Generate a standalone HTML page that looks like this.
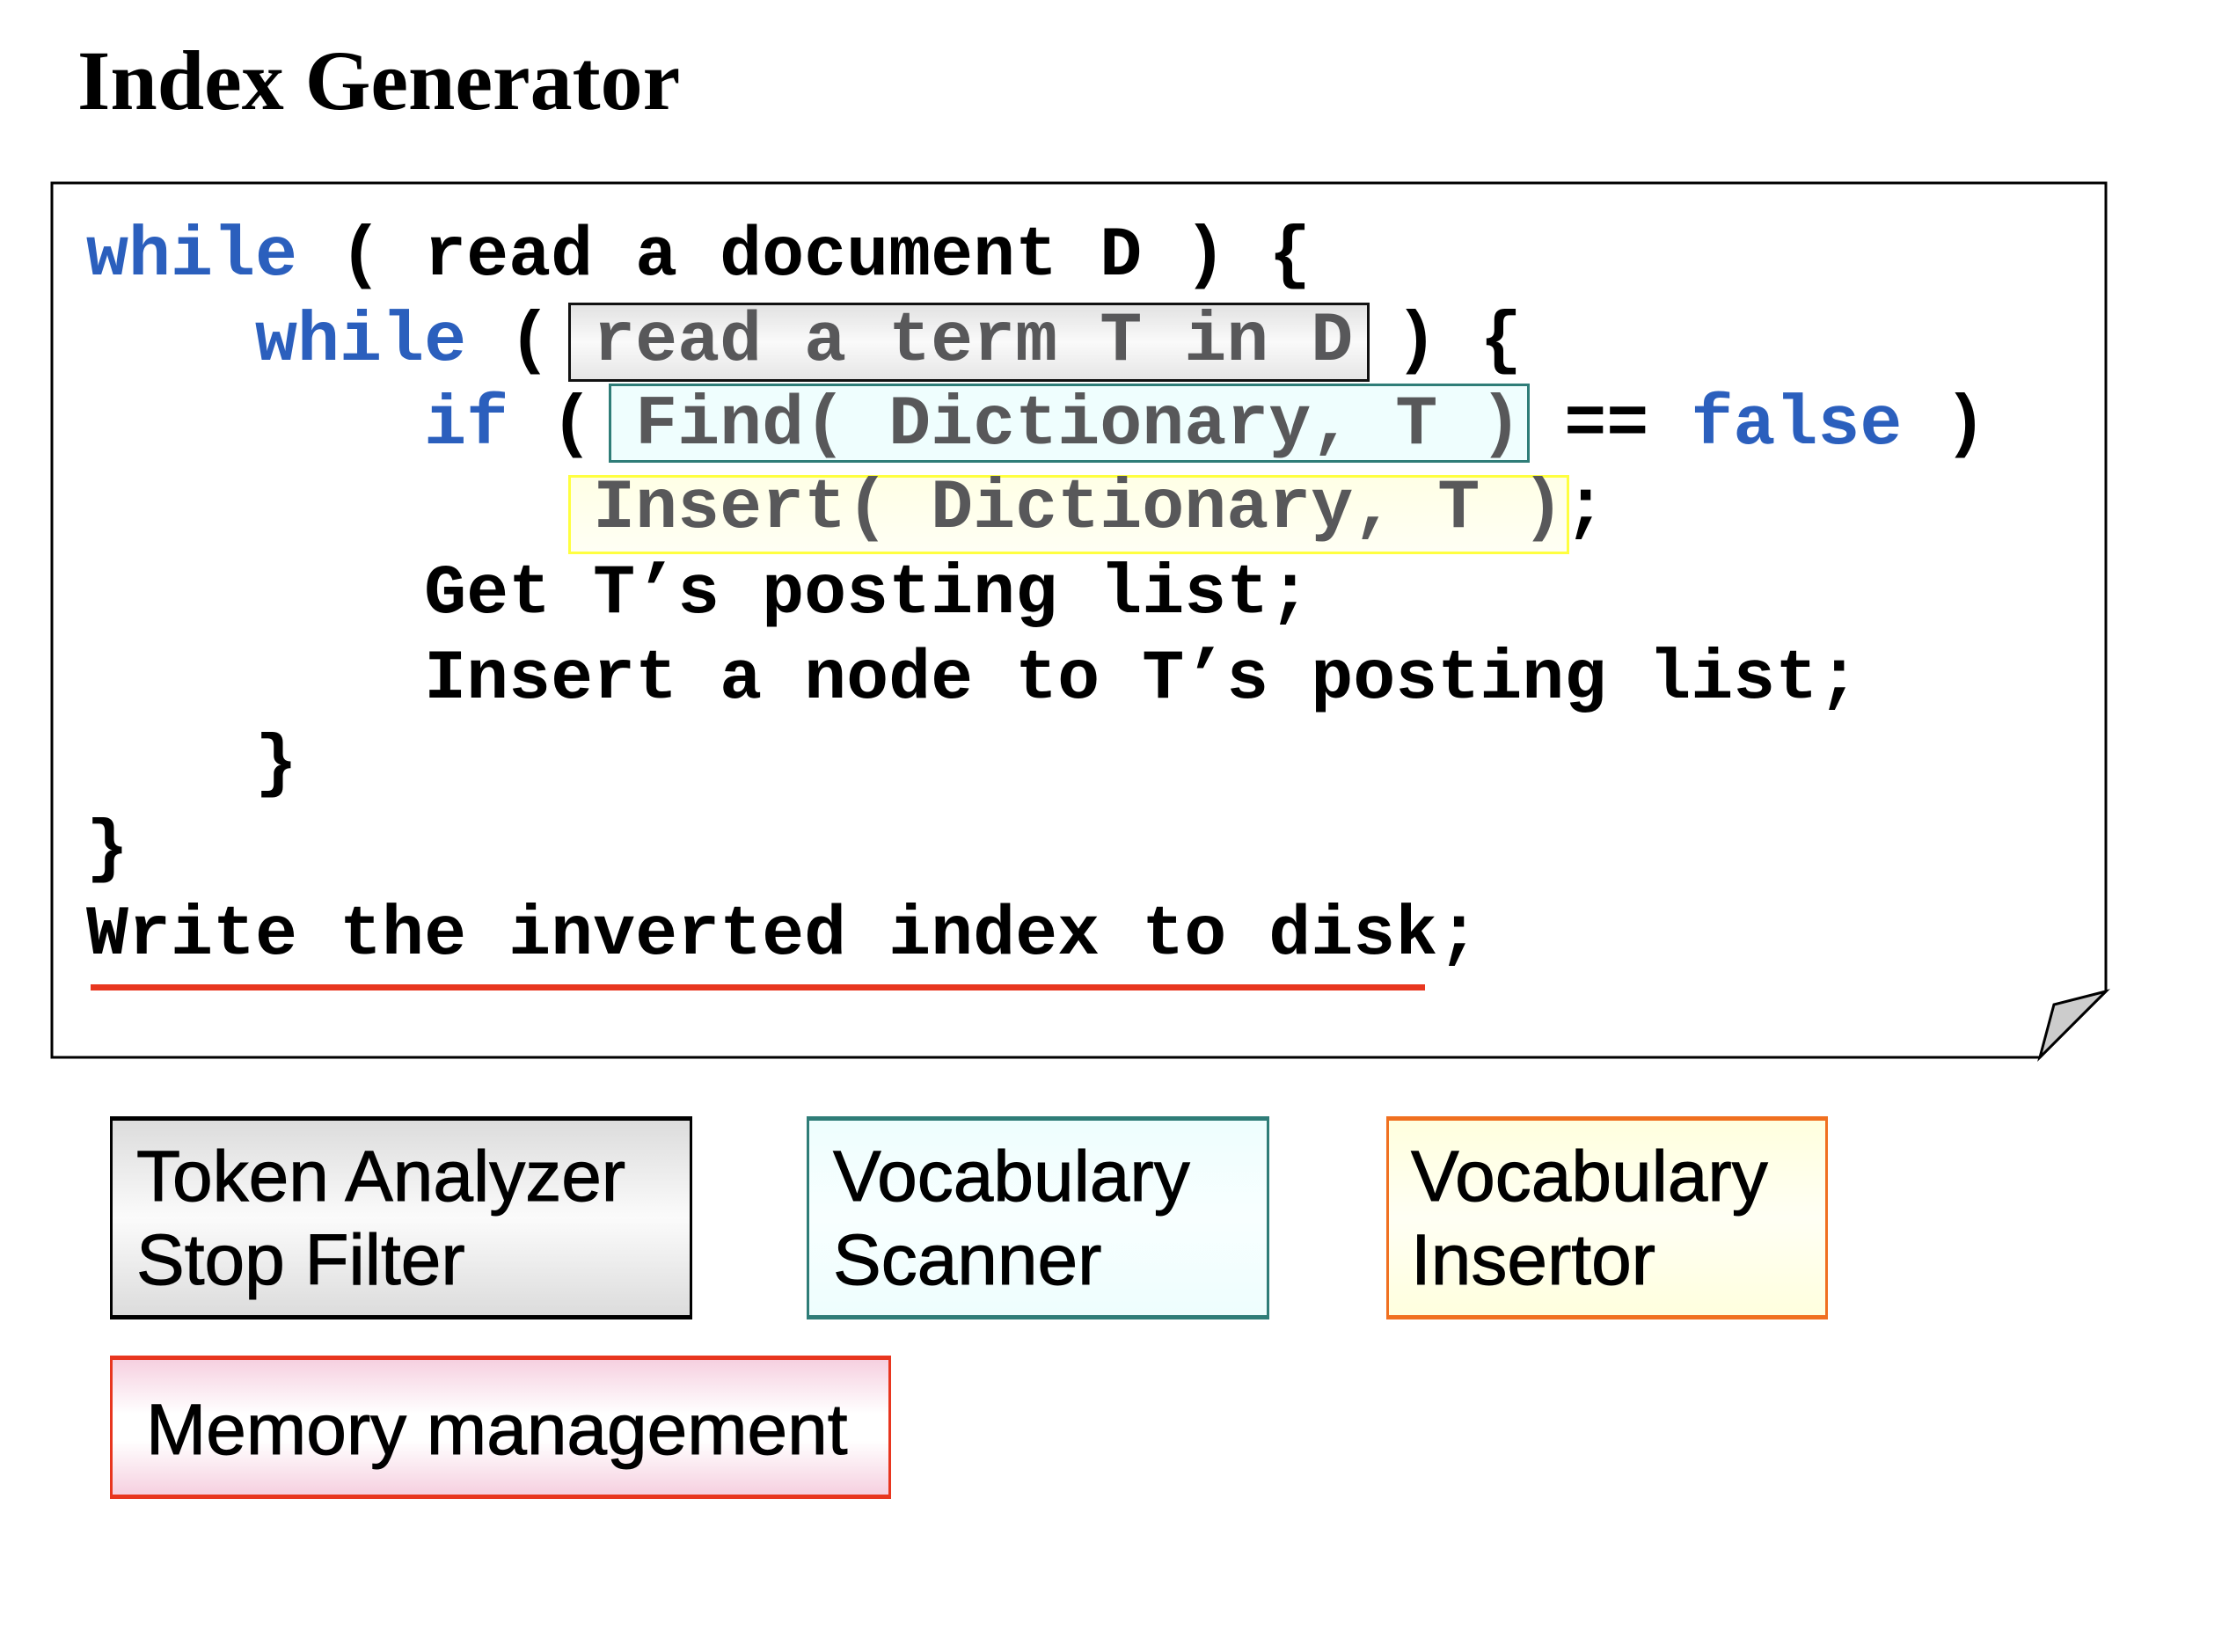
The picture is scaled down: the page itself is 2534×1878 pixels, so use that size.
<!DOCTYPE html>
<html><head><meta charset="utf-8"><style>
html,body{margin:0;padding:0;background:#fff}
body{width:2534px;height:1878px;position:relative;overflow:hidden}
.t{position:absolute;left:88px;top:36px;font:bold 96px "Liberation Serif",serif;color:#000}
.c{position:absolute;font:bold 80px/1 "Liberation Mono",monospace;white-space:pre;color:#000}
.b{color:#2b5fbd}
.g{color:#58585a}
.bx{position:absolute;box-sizing:border-box}
.lbl{position:absolute;font:82px/95px "Liberation Sans",sans-serif;color:#000;white-space:pre;-webkit-text-stroke:1px #000}
</style></head><body>
<div class="t">Index Generator</div>
<svg style="position:absolute;left:0;top:0" width="2534" height="1878">
<path d="M59 208 H2394 V1127 L2319 1202 H59 Z" fill="#fff" stroke="#000" stroke-width="3"/>
<path d="M2394 1127 L2335 1142 L2319 1202 Z" fill="#ccc" stroke="#000" stroke-width="3"/>
<rect x="103" y="1119" width="1517" height="7" fill="#e8361f"/>
</svg>
<div class="bx" style="left:646px;top:344px;width:911px;height:90px;border:3px solid #111;background:linear-gradient(#e2e2e2,#fafafa 50%,#e6e6e6)"></div>
<div class="bx" style="left:692px;top:436px;width:1047px;height:90px;border:3px solid #2f7d78;background:#effefe"></div>
<div class="bx" style="left:646px;top:540px;width:1138px;height:90px;border:3px solid #ffff40;background:linear-gradient(#ffffe6,#fffff4)"></div>
<div class="c" style="left:98px;top:252px"><span class="b">while</span> ( read a document D ) {</div>
<div class="c" style="left:98px;top:349px">    <span class="b">while</span> (<span class="g"> read a term T in D </span>) {</div>
<div class="c" style="left:98px;top:444px">        <span class="b">if</span> ( <span class="g">Find( Dictionary, T )</span> == <span class="b">false</span> )</div>
<div class="c" style="left:98px;top:539px">            <span class="g">Insert( Dictionary, T )</span>;</div>
<div class="c" style="left:98px;top:636px">        Get T’s posting list;</div>
<div class="c" style="left:98px;top:733px">        Insert a node to T’s posting list;</div>
<div class="c" style="left:98px;top:830px">    }</div>
<div class="c" style="left:98px;top:927px">}</div>
<div class="c" style="left:98px;top:1024px">Write the inverted index to disk;</div>

<div class="bx" style="left:125px;top:1269px;width:662px;height:231px;border:3px solid #000;border-top-width:5px;border-bottom-width:5px;background:linear-gradient(#dcdcdc,#fbfbfb 50%,#dcdcdc)"></div>
<div class="lbl" style="left:155px;top:1290px">Token Analyzer
Stop Filter</div>
<div class="bx" style="left:917px;top:1269px;width:526px;height:231px;border:3px solid #2f7d78;border-top-width:5px;border-bottom-width:5px;background:linear-gradient(#eefefe,#f8ffff 50%,#eefefe)"></div>
<div class="lbl" style="left:947px;top:1290px">Vocabulary
Scanner</div>
<div class="bx" style="left:1576px;top:1269px;width:502px;height:231px;border:3px solid #f07020;border-top-width:5px;border-bottom-width:5px;background:linear-gradient(#ffffde,#fffff4 50%,#ffffde)"></div>
<div class="lbl" style="left:1604px;top:1290px">Vocabulary
Insertor</div>
<div class="bx" style="left:125px;top:1541px;width:888px;height:163px;border:3px solid #e8361f;border-top-width:5px;border-bottom-width:5px;background:linear-gradient(#f6d0e0,#fff 40%,#fff 60%,#f6d0e0)"></div>
<div class="lbl" style="left:166px;top:1578px">Memory management</div>
</body></html>
